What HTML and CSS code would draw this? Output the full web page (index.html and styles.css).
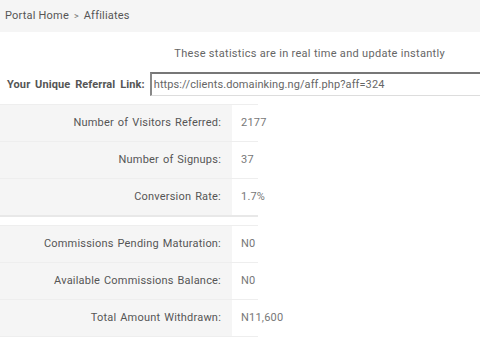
FILE: index.html
```html
<!DOCTYPE html>
<html lang="en">
<head>
    <meta charset="UTF-8">
    <meta name="viewport" content="width=device-width, initial-scale=1.0">
    <title>Affiliates</title>
    <link rel="stylesheet" href="styles.css">
</head>
<body>
    <div class="crumbs">
        <a href="#">Portal Home</a> <span class="sep">&gt;</span> Affiliates
    </div>

    <p class="note">These statistics are in real time and update instantly</p>

    <div class="ref-row">
        <label for="ref-link">Your Unique Referral Link:</label>
        <input id="ref-link" type="text" value="https://clients.domainking.ng/aff.php?aff=324" readonly>
    </div>

    <!-- visitor stats -->
    <div class="stats first">
        <div class="stat-row"><div class="lbl">Number of Visitors Referred:</div><div class="val">2177</div></div>
        <div class="stat-row"><div class="lbl">Number of Signups:</div><div class="val">37</div></div>
        <div class="stat-row"><div class="lbl">Conversion Rate:</div><div class="val">1.7%</div></div>
    </div>

    <!-- commissions -->
    <div class="stats">
        <div class="stat-row"><div class="lbl">Commissions Pending Maturation:</div><div class="val">N0</div></div>
        <div class="stat-row"><div class="lbl">Available Commissions Balance:</div><div class="val">N0</div></div>
        <div class="stat-row"><div class="lbl">Total Amount Withdrawn:</div><div class="val">N11,600</div></div>
    </div>
</body>
</html>
```

FILE: styles.css
```css
html, body {margin: 0; padding: 0; overflow: hidden;}
body {background-color: white; color: #555;
    font-family: Roboto, 'Liberation Sans', Arial, sans-serif; font-size: 11px; letter-spacing: 0.2px;
}

.crumbs {height: 32px; line-height: 32px; padding-left: 5px; background-color: #f5f5f5; color: #555;}
.crumbs a {color: #555; text-decoration: none;}
.crumbs .sep {font-size: 9px; color: #777; margin: 0 2px;}

.note {margin: 0; padding: 15px 35px 11px 0; line-height: 14px; text-align: right; color: #666; letter-spacing: 0.3px;}

.ref-row {display: flex; align-items: center; height: 24px; margin-bottom: 8px; white-space: nowrap;}
.ref-row label {font-weight: bold; color: #555; padding-left: 7px; margin-right: 5px; word-spacing: 2px; letter-spacing: 0.1px;}
/* the field runs on past the window in the original, so no right border */
.ref-row input {flex: 1; min-width: 0; height: 24px; box-sizing: border-box; margin: 0; padding: 0 2px;
    border: 1px solid; border-width: 2px 0 1px 2px; border-color: #777 #ddd #ddd #888;
    font-family: inherit; font-size: 11px; letter-spacing: 0.1px; color: #666; background: white; outline: none;}

.stats {width: 258px; border-top: 1px solid #eee;}
.stats.first {margin-bottom: 8px; border-bottom: 2px solid #e8e8e8;}
.stat-row {display: flex; height: 36px; line-height: 36px; border-bottom: 1px solid #eee; white-space: nowrap;}
.stat-row:last-child {border-bottom: none;}
.stats:not(.first) .stat-row:last-child {border-bottom: 1px solid #eee;}
.lbl {width: 221px; padding-right: 11px; text-align: right; background-color: #f5f5f5; color: #555; word-spacing: 1px;}
.val {width: 17px; padding-left: 9px; color: #777;}
```
